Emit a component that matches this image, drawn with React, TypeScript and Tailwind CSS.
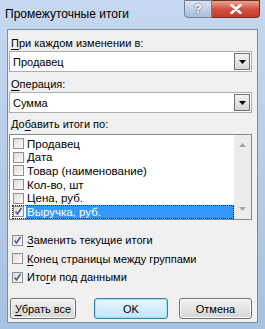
import React from "react";

const items = [
  { label: "Продавец", checked: false },
  { label: "Дата", checked: false },
  { label: "Товар (наименование)", checked: false },
  { label: "Кол-во, шт", checked: false },
  { label: "Цена, руб.", checked: false },
  { label: "Выручка, руб.", checked: true, selected: true },
];

function Check({ checked }: { checked: boolean }) {
  return (
    <span className="flex h-[11px] w-[11px] shrink-0 items-center justify-center border border-[#8e8f8f] bg-gradient-to-br from-[#dcdcdc] to-[#fbfbfb]">
      {checked && (
        <svg width="9" height="9" viewBox="0 0 9 9">
          <path d="M1.5 4.5 L3.5 7 L7.5 1" fill="none" stroke="#4a5f97" strokeWidth="1.6" />
        </svg>
      )}
    </span>
  );
}

function Combo({ value }: { value: string }) {
  return (
    <div className="flex h-[21px] items-stretch border border-[#abadb3] bg-white">
      <div className="flex flex-1 items-center pl-[3px]">{value}</div>
      <div className="m-[1px] flex w-[16px] items-center justify-center border border-[#707070] bg-gradient-to-b from-[#f2f2f2] to-[#d6d6d6]">
        <svg width="7" height="4" viewBox="0 0 7 4">
          <path d="M0 0 H7 L3.5 4 Z" fill="#000" />
        </svg>
      </div>
    </div>
  );
}

function Btn({ children, primary }: { children: React.ReactNode; primary?: boolean }) {
  return (
    <div
      className={
        "flex h-[21px] items-center justify-center whitespace-nowrap rounded-[3px] border bg-gradient-to-b " +
        (primary
          ? "border-[#3c7fb1] from-[#eaf6fd] to-[#bee6fd] shadow-[inset_0_0_0_1px_#9ce4fc]"
          : "border-[#707070] from-[#f2f2f2] to-[#d5d5d5] shadow-[inset_0_0_0_1px_#fcfcfc]")
      }
    >
      {children}
    </div>
  );
}

export default function App() {
  return (
    <div
      className="flex h-[329px] w-[265px] flex-col overflow-hidden bg-gradient-to-b from-[#c5d8ef] to-[#a7c1e1] text-[11px] leading-[14px] text-black"
      style={{ fontFamily: "'Liberation Sans', Arial, sans-serif" }}
    >
      {/* Title bar */}
      <div className="flex h-[29px] shrink-0 items-start">
        <div className="flex-1 pl-[5px] pt-[7px] text-[12px]">Промежуточные итоги</div>
        <div className="mr-[5px] flex h-[18px]">
          <div className="flex w-[28px] items-center justify-center rounded-bl-[4px] border border-[#6d7e99] bg-gradient-to-b from-[#dbe5f1] to-[#a9bdd8] text-[13px] font-bold text-white [text-shadow:0_0_2px_#334]">
            ?
          </div>
          <div className="flex w-[48px] items-center justify-center rounded-br-[4px] border border-l-0 border-[#6e2c25] bg-gradient-to-b from-[#e8a493] via-[#d0513f] to-[#c43b2a]">
            <svg width="12" height="10" viewBox="0 0 12 10">
              <path d="M1.5 1 L10.5 9 M10.5 1 L1.5 9" stroke="#fff" strokeWidth="2.6" strokeLinecap="round" />
            </svg>
          </div>
        </div>
      </div>

      {/* Client area */}
      <div className="mx-[7px] flex h-[294px] shrink-0 flex-col border border-[#7a8ea8] bg-[#f0f0f0] pl-[1px] pr-[5px]">
        <div className="pl-[2px] pt-[6px]">
          <span className="underline underline-offset-2">П</span>ри каждом изменении в:
        </div>
        <div className="mt-[1px]">
          <Combo value="Продавец" />
        </div>
        <div className="mt-[5px] pl-[2px]">
          <span className="underline underline-offset-2">О</span>перация:
        </div>
        <div className="mt-[1px]">
          <Combo value="Сумма" />
        </div>
        <div className="mt-[4px] pl-[2px]">
          До<span className="underline underline-offset-2">б</span>авить итоги по:
        </div>
        <div className="mt-[3px] flex h-[86px] border border-[#828790] bg-white">
          <div className="flex flex-1 flex-col pl-[2px] pt-[2px]">
            {items.map((it) => (
              <div
                key={it.label}
                className={
                  "flex h-[13.6px] items-center gap-[2px] " +
                  (it.selected ? "outline outline-1 outline-dotted outline-[#222] -outline-offset-1" : "")
                }
              >
                <span className="pl-[1px]">
                  <Check checked={it.checked} />
                </span>
                <span
                  className={
                    "flex h-full flex-1 items-center pl-[1px] text-[11.5px] " +
                    (it.selected ? "bg-[#3399ff] text-white" : "")
                  }
                >
                  {it.label}
                </span>
              </div>
            ))}
          </div>
          <div className="flex w-[17px] flex-col items-center justify-between bg-[#ececec] py-[8px]">
            <svg width="7" height="4" viewBox="0 0 7 4">
              <path d="M0 4 H7 L3.5 0 Z" fill="#a3a3a3" />
            </svg>
            <svg width="7" height="4" viewBox="0 0 7 4">
              <path d="M0 0 H7 L3.5 4 Z" fill="#a3a3a3" />
            </svg>
          </div>
        </div>

        <div className="mt-[13px] flex flex-col gap-[4.5px] pl-[3px]">
          <div className="flex items-center gap-[4px]">
            <Check checked />
            <span>
              <span className="underline underline-offset-2">З</span>аменить текущие итоги
            </span>
          </div>
          <div className="flex items-center gap-[4px]">
            <Check checked={false} />
            <span>
              <span className="underline underline-offset-2">К</span>онец страницы между группами
            </span>
          </div>
          <div className="flex items-center gap-[4px]">
            <Check checked />
            <span>
              Ито<span className="underline underline-offset-2">г</span>и под данными
            </span>
          </div>
        </div>

        <div className="mt-[14px] flex items-center">
          <div className="ml-[1px] w-[66px]">
            <Btn>
              <span>
                <span className="underline underline-offset-2">У</span>брать все
              </span>
            </Btn>
          </div>
          <div className="ml-[18px] w-[74px]">
            <Btn primary>OK</Btn>
          </div>
          <div className="ml-[11px] w-[73px]">
            <Btn>Отмена</Btn>
          </div>
        </div>
      </div>
    </div>
  );
}
